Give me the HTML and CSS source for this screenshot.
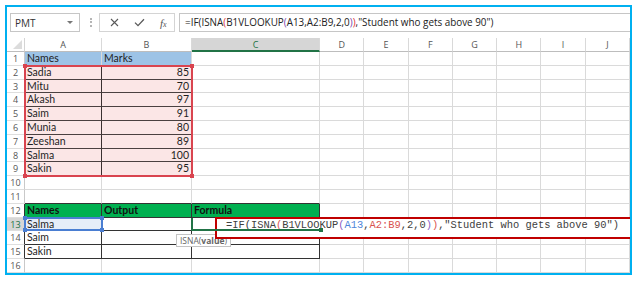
FILE: index.html
```html
<!DOCTYPE html>
<html lang="en">
<head>
    <meta charset="UTF-8">
    <title>ISNA VLOOKUP example</title>
    <link rel="stylesheet" href="styles.css">
</head>
<body>

<div class="window">
    <div class="formula-bar">
        <div class="name-box">PMT<span class="caret"></span></div>
        <div class="grip"></div>
        <div class="fx-buttons">
            <svg class="btn-x" width="9" height="9" viewBox="0 0 9 9"><path d="M1 1L8 8M8 1L1 8" stroke="#595959" stroke-width="1.1" fill="none"/></svg>
            <svg class="btn-ok" width="11" height="9" viewBox="0 0 11 9"><path d="M1 4.6L4 7.6L10 1.2" stroke="#595959" stroke-width="1.3" fill="none"/></svg>
            <span class="fx">f<small>x</small></span>
        </div>
        <div class="formula-input">=IF(ISNA<span class="p-red">(</span>B1VLOOKUP<span class="p-purple">(</span>A13,A2:B9,2,0<span class="p-purple">)</span><span class="p-red">)</span>,"Student who gets above 90")</div>
    </div>

    <div class="sheet">
        <div class="corner"></div>
        <div class="ch">A</div><div class="ch">B</div><div class="ch ch-active">C</div><div class="ch">D</div><div class="ch">E</div><div class="ch">F</div><div class="ch">G</div><div class="ch">H</div><div class="ch">I</div><div class="ch">J</div>

        <div class="rh">1</div><div class="c fill-blue">Names</div><div class="c fill-blue">Marks</div><div class="c"></div><div class="c"></div><div class="c"></div><div class="c"></div><div class="c"></div><div class="c"></div><div class="c"></div><div class="c"></div>
        <div class="rh">2</div><div class="c pink name">Sadia</div><div class="c pink num">85</div><div class="c"></div><div class="c"></div><div class="c"></div><div class="c"></div><div class="c"></div><div class="c"></div><div class="c"></div><div class="c"></div>
        <div class="rh">3</div><div class="c pink name">Mitu</div><div class="c pink num">70</div><div class="c"></div><div class="c"></div><div class="c"></div><div class="c"></div><div class="c"></div><div class="c"></div><div class="c"></div><div class="c"></div>
        <div class="rh">4</div><div class="c pink name">Akash</div><div class="c pink num">97</div><div class="c"></div><div class="c"></div><div class="c"></div><div class="c"></div><div class="c"></div><div class="c"></div><div class="c"></div><div class="c"></div>
        <div class="rh">5</div><div class="c pink name">Saim</div><div class="c pink num">91</div><div class="c"></div><div class="c"></div><div class="c"></div><div class="c"></div><div class="c"></div><div class="c"></div><div class="c"></div><div class="c"></div>
        <div class="rh">6</div><div class="c pink name">Munia</div><div class="c pink num">80</div><div class="c"></div><div class="c"></div><div class="c"></div><div class="c"></div><div class="c"></div><div class="c"></div><div class="c"></div><div class="c"></div>
        <div class="rh">7</div><div class="c pink name">Zeeshan</div><div class="c pink num">89</div><div class="c"></div><div class="c"></div><div class="c"></div><div class="c"></div><div class="c"></div><div class="c"></div><div class="c"></div><div class="c"></div>
        <div class="rh">8</div><div class="c pink name">Salma</div><div class="c pink num">100</div><div class="c"></div><div class="c"></div><div class="c"></div><div class="c"></div><div class="c"></div><div class="c"></div><div class="c"></div><div class="c"></div>
        <div class="rh">9</div><div class="c pink name">Sakin</div><div class="c pink num">95</div><div class="c"></div><div class="c"></div><div class="c"></div><div class="c"></div><div class="c"></div><div class="c"></div><div class="c"></div><div class="c"></div>
        <div class="rh">10</div><div class="c"></div><div class="c"></div><div class="c"></div><div class="c"></div><div class="c"></div><div class="c"></div><div class="c"></div><div class="c"></div><div class="c"></div><div class="c"></div>
        <div class="rh">11</div><div class="c above"></div><div class="c above"></div><div class="c above"></div><div class="c"></div><div class="c"></div><div class="c"></div><div class="c"></div><div class="c"></div><div class="c"></div><div class="c"></div>
        <div class="rh edge">12</div><div class="c tbl fill-green">Names</div><div class="c tbl fill-green">Output</div><div class="c tbl fill-green">Formula</div><div class="c"></div><div class="c"></div><div class="c"></div><div class="c"></div><div class="c"></div><div class="c"></div><div class="c"></div>
        <div class="rh edge rh-active">13</div><div class="c tbl sel-fill">Salma</div><div class="c tbl"></div><div class="c tbl"></div><div class="c"></div><div class="c"></div><div class="c"></div><div class="c"></div><div class="c"></div><div class="c"></div><div class="c"></div>
        <div class="rh edge">14</div><div class="c tbl">Saim</div><div class="c tbl"></div><div class="c tbl"></div><div class="c"></div><div class="c"></div><div class="c"></div><div class="c"></div><div class="c"></div><div class="c"></div><div class="c"></div>
        <div class="rh edge">15</div><div class="c tbl">Sakin</div><div class="c tbl"></div><div class="c tbl"></div><div class="c"></div><div class="c"></div><div class="c"></div><div class="c"></div><div class="c"></div><div class="c"></div><div class="c"></div>
        <div class="rh">16</div><div class="c"></div><div class="c"></div><div class="c"></div><div class="c"></div><div class="c"></div><div class="c"></div><div class="c"></div><div class="c"></div><div class="c"></div><div class="c"></div>

        <!-- overlays drawn on top of the grid -->
        <div class="range-ref"><i class="h tl"></i><i class="h tr"></i><i class="h bl"></i><i class="h br"></i></div>
        <div class="range-sel"><i class="h tl"></i><i class="h tr"></i><i class="h bl"></i><i class="h br"></i></div>
        <div class="tip">ISNA(<b>value</b>)</div>
        <div class="callout">=IF(ISNA<span class="r-red">(</span>B1VLOOKUP<span class="r-purple">(</span><span class="r-blue">A13</span>,<span class="r-red">A2:B9</span>,2,0<span class="r-purple">)</span><span class="r-red">)</span>,"Student who gets above 90")</div>
        <div class="active-cell"><i class="h br"></i></div>
    </div>
</div>

</body>
</html>
```

FILE: styles.css
```css
* {
    margin: 0;
    padding: 0;
    box-sizing: border-box;
}
body {
    background: #fff;
    font-family: 'Lato', 'Liberation Sans', sans-serif;
    color: #222;
}
.window {
    margin: 5px;
    width: 627px;
    height: 270px;
    border: 2px solid #00b0f0;
    overflow: hidden;
    background: #fff;
}

/* formula bar */
.formula-bar {
    height: 31px;
    display: flex;
    align-items: center;
    font-family: 'Open Sans', 'Liberation Sans', sans-serif;
}
.name-box {
    margin-left: 3px;
    width: 70px;
    height: 19px;
    border: 1px solid #c6c6c6;
    display: flex;
    align-items: center;
    padding-left: 4px;
    font-size: 10px;
    color: #333;
}
.caret {
    margin-left: auto;
    margin-right: 6px;
    border-left: 3px solid transparent;
    border-right: 3px solid transparent;
    border-top: 3px solid #777;
}
.grip {
    margin-left: 10px;
    width: 2px;
    height: 9px;
    border-left: 2px dotted #b5b5b5;
}
.fx-buttons {
    margin-left: 7px;
    width: 76px;
    height: 19px;
    border: 1px solid #d4d4d4;
    display: flex;
    align-items: center;
    padding-left: 10px;
}
.btn-ok {
    margin-left: 15px;
}
.fx {
    margin-left: 15px;
    font-family: 'Liberation Serif', serif;
    font-style: italic;
    font-size: 11px;
    color: #555;
}
.fx small {
    font-size: 8px;
}
.formula-input {
    margin-left: 4px;
    flex: 1;
    height: 19px;
    border: 1px solid #c6c6c6;
    border-right: none;
    padding-left: 5px;
    font-size: 9.9px;
    line-height: 17px;
    color: #222;
    white-space: nowrap;
}
.p-red {
    color: #e0303a;
}
.p-purple {
    color: #7a3fb0;
}

/* grid */
.sheet {
    position: relative;
    display: grid;
    grid-template-columns: 18px 77px 90px 128px repeat(7, 1fr);
    grid-template-rows: 14px repeat(16, 13.8px);
    font-size: 10.5px;
}
.corner {
    border-right: 1px solid #d4d4d4;
    border-bottom: 1px solid #bdbdbd;
    position: relative;
}
.corner::after {
    content: "";
    position: absolute;
    right: 2px;
    bottom: 2px;
    border-left: 9px solid transparent;
    border-bottom: 9px solid #dcdcdc;
}
.ch {
    border-right: 1px solid #d9d9d9;
    border-bottom: 1px solid #bdbdbd;
    text-align: center;
    font-family: 'Open Sans', 'Liberation Sans', sans-serif;
    font-size: 9px;
    line-height: 13px;
    color: #555;
}
.ch-active {
    background: #d6d6d6;
    border-bottom: 2px solid #217346;
    color: #217346;
}
.rh {
    border-right: 1px solid #c9c9c9;
    border-bottom: 1px solid #dedede;
    text-align: center;
    font-family: 'Open Sans', 'Liberation Sans', sans-serif;
    font-size: 9px;
    line-height: 13px;
    color: #555;
}
.rh.edge {
    border-right-color: #333;
}
.rh-active {
    background: #d6d6d6;
    color: #217346;
}
.c {
    border-right: 1px solid #dadada;
    border-bottom: 1px solid #dadada;
    padding: 0 2px;
    line-height: 13px;
    white-space: nowrap;
    color: #1e1e1e;
}
.fill-blue {
    background: #9dc3e6;
}
.pink {
    background: #fbe6e6;
    border-bottom-color: #4a4040;
}
.pink.name {
    border-right-color: #3a3030;
}
.num {
    text-align: right;
}
.above {
    border-bottom-color: #333;
}
.tbl {
    border-right-color: #333;
    border-bottom-color: #333;
}
.fill-green {
    background: #00b050;
    font-weight: 700;
    color: #111;
}
.sel-fill {
    background: #e6edf8;
}

/* overlays */
.range-ref {
    position: absolute;
    grid-column: 2 / 4;
    grid-row: 3 / 11;
    margin: -1px 0 -1px -1px;
    border: 2px solid #d9444f;
}
.range-sel {
    position: absolute;
    grid-column: 2 / 3;
    grid-row: 14 / 15;
    margin: -1px 0 0 -1px;
    border: 2px solid #4a7ed2;
}
.range-ref,
.range-sel {
    top: 0;
    right: -1px;
    bottom: 0;
    left: 0;
}
.h {
    position: absolute;
    width: 4px;
    height: 4px;
}
.range-ref .h {
    background: #d9444f;
}
.range-sel .h {
    background: #4a7ed2;
}
.active-cell .h {
    background: #217346;
}
.tl { left: -3px; top: -3px; }
.tr { right: -3px; top: -3px; }
.bl { left: -3px; bottom: -3px; }
.br { right: -3px; bottom: -3px; }

.callout {
    position: absolute;
    left: 208px;
    top: 179px;
    width: 417px;
    height: 22px;
    border: 2px solid #c00000;
    background: #fff;
    padding: 1px 0 0 9px;
    font-family: 'Liberation Mono', monospace;
    font-size: 10.4px;
    line-height: 11px;
    color: #404040;
    white-space: nowrap;
}
.r-red {
    color: #d9534f;
}
.r-purple {
    color: #8a5bc4;
}
.r-blue {
    color: #4f86d9;
}
.active-cell {
    position: absolute;
    grid-column: 4 / 5;
    grid-row: 14 / 15;
    top: 0;
    right: 0;
    bottom: 0;
    left: -1px;
    border-left: 2px solid #217346;
    border-bottom: 2px solid #217346;
}
.tip {
    position: absolute;
    left: 169px;
    top: 196px;
    height: 13px;
    padding: 0 3px;
    border: 1px solid #c4c4c4;
    background: #fff;
    font-family: 'Open Sans', 'Liberation Sans', sans-serif;
    font-size: 8.5px;
    line-height: 11px;
    color: #666;
}
.tip b {
    font-weight: 700;
}
```
